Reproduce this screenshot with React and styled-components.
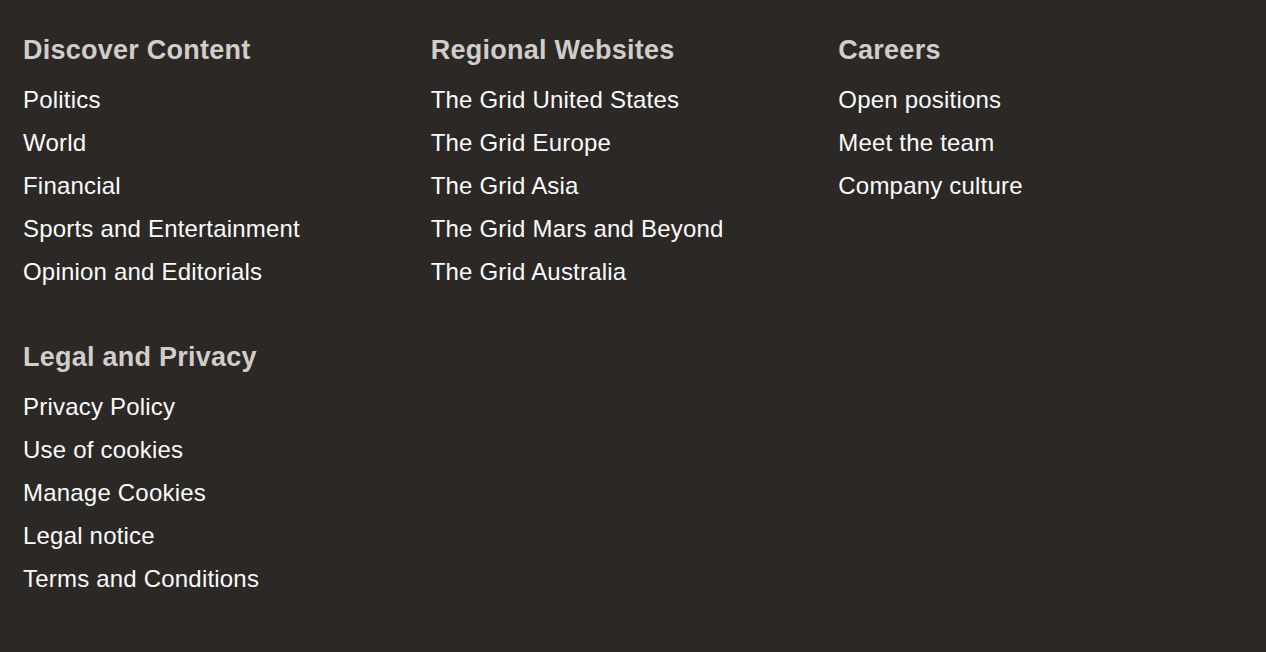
import React from "react";
import styled, { createGlobalStyle } from "styled-components";

const Global = createGlobalStyle`
  html, body {
    margin: 0;
    padding: 0;
    background: #2c2826;
  }
  body {
    font-family: "Liberation Sans", Arial, Helvetica, sans-serif;
    -webkit-font-smoothing: antialiased;
  }
`;

const Footer = styled.footer`
  min-height: 652px;
  box-sizing: border-box;
  background: #2c2826;
  padding: 35px 20px 0 23px;
`;

const Grid = styled.div`
  display: grid;
  grid-template-columns: repeat(3, 1fr);
  align-items: start;
`;

const Column = styled.div`
  display: flex;
  flex-direction: column;
  gap: 49px;
`;

const Section = styled.section`
  display: flex;
  flex-direction: column;
  gap: 12px;
`;

const Heading = styled.h2`
  margin: 0;
  font-size: 27px;
  line-height: 31px;
  font-weight: 700;
  letter-spacing: 0.25px;
  color: #d1cdc9;
`;

const List = styled.ul`
  list-style: none;
  margin: 0;
  padding: 0;
`;

const Item = styled.li`
  font-size: 24px;
  line-height: 43px;
  letter-spacing: 0.2px;
`;

const Link = styled.a`
  color: #fbfbfa;
  text-decoration: none;
`;

const sections = {
  discover: {
    title: "Discover Content",
    links: ["Politics", "World", "Financial", "Sports and Entertainment", "Opinion and Editorials"],
  },
  legal: {
    title: "Legal and Privacy",
    links: ["Privacy Policy", "Use of cookies", "Manage Cookies", "Legal notice", "Terms and Conditions"],
  },
  regional: {
    title: "Regional Websites",
    links: [
      "The Grid United States",
      "The Grid Europe",
      "The Grid Asia",
      "The Grid Mars and Beyond",
      "The Grid Australia",
    ],
  },
  careers: {
    title: "Careers",
    links: ["Open positions", "Meet the team", "Company culture"],
  },
};

function LinkSection({ data }) {
  return (
    <Section>
      <Heading>{data.title}</Heading>
      <List>
        {data.links.map((l) => (
          <Item key={l}>
            <Link href="#">{l}</Link>
          </Item>
        ))}
      </List>
    </Section>
  );
}

export default function App() {
  return (
    <>
      <Global />
      <Footer>
        <Grid>
          <Column>
            <LinkSection data={sections.discover} />
            <LinkSection data={sections.legal} />
          </Column>
          <Column>
            <LinkSection data={sections.regional} />
          </Column>
          <Column>
            <LinkSection data={sections.careers} />
          </Column>
        </Grid>
      </Footer>
    </>
  );
}
